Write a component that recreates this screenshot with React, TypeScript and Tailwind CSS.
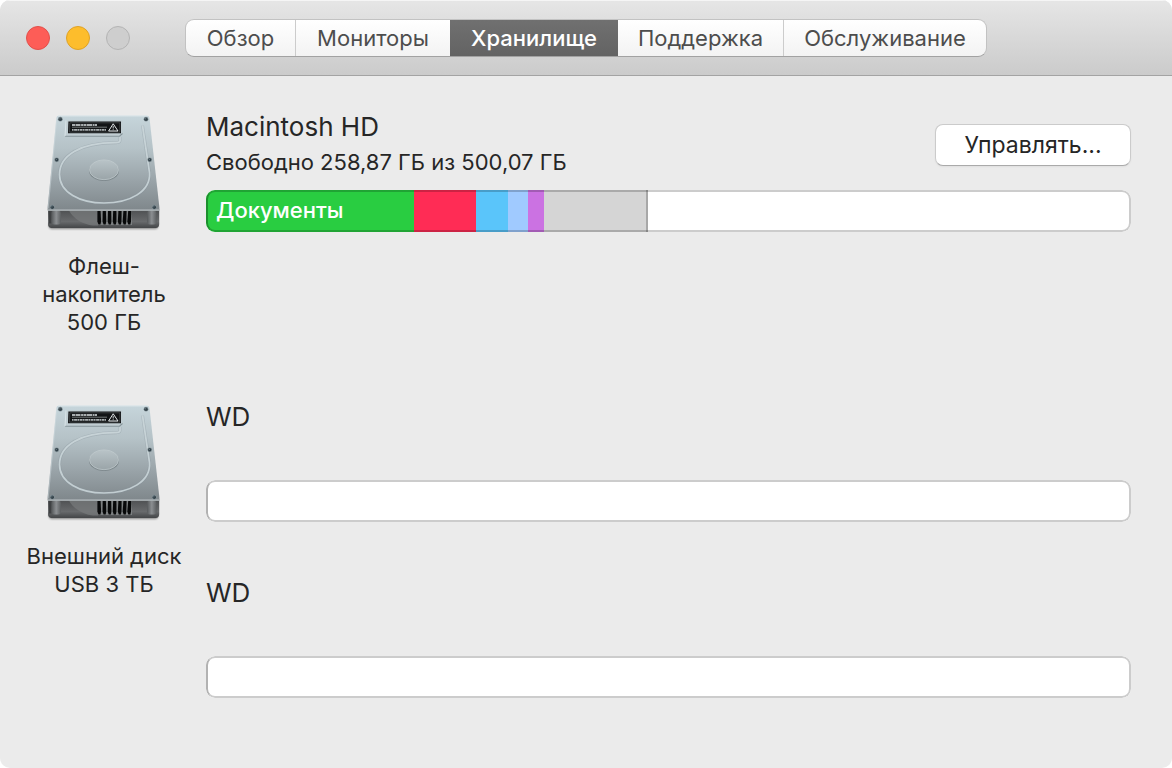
import { useId } from "react";
import type { ReactNode } from "react";

const tabs = [
  { label: "Обзор", width: "w-[109px]", active: false },
  { label: "Мониторы", width: "w-[155px]", active: false },
  { label: "Хранилище", width: "w-[168px]", active: true },
  { label: "Поддержка", width: "w-[165px]", active: false },
  { label: "Обслуживание", width: "w-[203px]", active: false },
];

type Segment = { color: string; share: number; label?: string };

const usage: Segment[] = [
  { color: "bg-[#29cd41]", share: 22.5, label: "Документы" },
  { color: "bg-[#ff2c55]", share: 6.7 },
  { color: "bg-[#5ac5fa]", share: 3.45 },
  { color: "bg-[#a0caff]", share: 2.15 },
  { color: "bg-[#cb72e2]", share: 1.75 },
  { color: "bg-[#d5d5d5] border-r-2 border-[#a8a8a8]", share: 11.2 },
];

const screws = [
  [16.3, 7.7],
  [102, 7.7],
  [12.7, 48.3],
  [105.7, 48.3],
  [8.3, 95.7],
  [110.3, 95.7],
];

function DriveIcon() {
  const id = useId();
  const plate = `${id}-plate`;
  const front = `${id}-front`;
  const hub = `${id}-hub`;
  const post = `${id}-post`;
  const soft = `${id}-soft`;
  const ridge =
    "M76 25.5V29Q76 31 72 31.2C36 31 15.5 44 15.5 63C15.5 81 36 91.5 60 91.5C86 91.5 107 80 105.5 61L98.5 14";
  return (
    <svg viewBox="0 0.5 120 120" className="size-[120px]" aria-hidden="true">
      <defs>
        <linearGradient id={plate} x1="0" y1="0" x2="0" y2="1">
          <stop offset="0" stopColor="#c6d5db" />
          <stop offset="0.35" stopColor="#b5c2c7" />
          <stop offset="0.7" stopColor="#98a2a7" />
          <stop offset="1" stopColor="#7f878b" />
        </linearGradient>
        <linearGradient id={front} x1="0" y1="0" x2="0" y2="1">
          <stop offset="0" stopColor="#4d4f51" />
          <stop offset="0.65" stopColor="#686a6c" />
          <stop offset="1" stopColor="#434547" />
        </linearGradient>
        <linearGradient id={hub} x1="0" y1="0" x2="0" y2="1">
          <stop offset="0" stopColor="#b9c4c8" />
          <stop offset="1" stopColor="#9aa4a8" />
        </linearGradient>
        <linearGradient id={post} x1="0" y1="0" x2="1" y2="0">
          <stop offset="0" stopColor="#55585a" />
          <stop offset="0.5" stopColor="#8b8e91" />
          <stop offset="1" stopColor="#5c5f61" />
        </linearGradient>
        <filter id={soft} x="-10%" y="-100%" width="120%" height="300%">
          <feGaussianBlur stdDeviation="1.2" />
        </filter>
      </defs>
      <rect x="5" y="111" width="109" height="6.5" rx="3" fill="#000" opacity="0.45" filter={`url(#${soft})`} />
      <path d="M4 98H115.2V112.5Q115.2 116.5 111.5 116.5H7.7Q4 116.5 4 112.5Z" fill={`url(#${front})`} />
      <path d="M25 99H54V114H49C39 113 29 107 25 99Z" fill="#77797b" opacity="0.75" />
      <path d="M5 99H7.5V112H5Z" fill="#3f4143" />
      <rect x="7.5" y="99" width="9.5" height="14" rx="3" fill={`url(#${post})`} />
      <rect x="103" y="99" width="9.5" height="14" rx="3" fill={`url(#${post})`} />
      <path d="M53 99H88V113.5H54Z" fill="#7d8082" />
      {[53.4, 58.7, 64, 69.2, 74.4, 79.4, 84.2].map((x, i) => (
        <path
          key={x}
          d={`M${x} 99.5h3.2l${0.5 - i * 0.15} 10.5l-0.6 3h-2.1l-1-3Z`}
          fill="#08090a"
        />
      ))}
      <path
        d="M14.5 4.3H103Q105.2 4.3 105.5 6.5L115.4 96V98.8H3.6V96L12.4 6.5Q12.7 4.3 14.5 4.3Z"
        fill={`url(#${plate})`}
      />
      <path d="M14 4.5H103.5" stroke="#dbe6ea" strokeWidth="0.9" />
      <path d="M12.8 6.5L4.1 97" stroke="#d5dfe3" strokeWidth="0.8" fill="none" opacity="0.6" />
      <path d="M3.7 98.6H115.3" stroke="#b9c0c3" strokeWidth="1.2" />
      <path d="M22 9L21 24.5H75.5L78.5 22V9Z" fill="#c0cdd2" />
      <path d="M21 24.7H75.5L78.5 22" fill="none" stroke="#87959a" strokeWidth="1.1" />
      <path d="M22 9L21 24.7" fill="none" stroke="#dde7eb" strokeWidth="0.9" />
      <path d={ridge} fill="none" stroke="#87939a" strokeWidth="3" opacity="0.35" />
      <path d={ridge} fill="none" stroke="#cdd8dc" strokeWidth="1.7" opacity="0.85" />
      <ellipse cx="60" cy="59.2" rx="15" ry="10.3" fill="#737d81" opacity="0.75" />
      <ellipse
        cx="60"
        cy="58.3"
        rx="14.5"
        ry="9.9"
        fill={`url(#${hub})`}
        stroke="#c3cdd0"
        strokeWidth="0.7"
      />
      <path d="M24.4 10H77V21.8H24Z" fill="#121416" />
      <path d="M25.8 11.3H75.8V20.6H25.5Z" fill="none" stroke="#656a6d" strokeWidth="0.5" />
      <path d="M28 13.5H53" stroke="#dce1e3" strokeWidth="1.5" strokeDasharray="3 0.5 5 0.6 2 0.4" />
      <path d="M28 15.7H63" stroke="#8d9294" strokeWidth="0.8" />
      <path d="M28 18.3H62" stroke="#a9afb1" strokeWidth="1.8" strokeDasharray="1.6 0.5 3 0.4" />
      <path d="M69.2 12.3L74 19.5H64.6Z" fill="none" stroke="#e1e6e8" strokeWidth="1" strokeLinejoin="round" />
      <path d="M69.2 14.5V17M69.2 17.8V18.6" stroke="#e1e6e8" strokeWidth="0.9" />
      {screws.map(([x, y]) => (
        <g key={`${x}-${y}`}>
          <circle cx={x} cy={y} r="2.4" fill="#829096" />
          <circle cx={x} cy={y} r="1.7" fill="#34424a" />
          <circle cx={x - 0.4} cy={y - 0.5} r="0.5" fill="#8497a0" />
        </g>
      ))}
    </svg>
  );
}

function StorageBar({ segments = [] }: { segments?: Segment[] }) {
  return (
    <div className="relative flex h-[42px] overflow-hidden rounded-[9px] bg-white">
      {segments.map((segment) => (
        <div
          key={segment.color}
          className={`flex shrink-0 items-center ${segment.color}`}
          style={{ width: `${segment.share}%` }}
        >
          {segment.label && (
            <span className="pb-0.5 pl-2.5 text-[22px] leading-7 font-medium text-white">{segment.label}</span>
          )}
        </div>
      ))}
      <div className="pointer-events-none absolute inset-0 rounded-[9px] border-2 border-black/20 border-l-black/30" />
    </div>
  );
}

function VolumeName({ children }: { children: ReactNode }) {
  return <h2 className="text-[26px] leading-[30px]">{children}</h2>;
}

function Device({ label, children }: { label: string[]; children: ReactNode }) {
  return (
    <section className="flex gap-3.5">
      <div className="flex w-44 shrink-0 flex-col items-center gap-5">
        <DriveIcon />
        <p className="text-center text-[22px] leading-7">
          {label.map((line) => (
            <span key={line} className="block whitespace-nowrap">
              {line}
            </span>
          ))}
        </p>
      </div>
      <div className="flex min-w-0 grow flex-col gap-14">{children}</div>
    </section>
  );
}

export default function App() {
  return (
    <div className="min-h-screen bg-white font-['Inter','Noto_Sans',sans-serif] text-[#262626]">
      <div className="flex min-h-screen flex-col overflow-hidden rounded-[10px] bg-[#ebebeb]">
        <header className="flex h-[76px] items-center border-b border-[#a3a3a3] bg-linear-to-b from-[#e6e6e6] to-[#cbcbcb] pt-px pl-[26px] shadow-[inset_0_1px_0_#f5f5f5]">
          <div className="flex w-[159px] shrink-0 gap-4">
            <button aria-label="Закрыть" className="size-6 rounded-full border border-[#e2504b] bg-[#fd5d57]" />
            <button aria-label="Свернуть" className="size-6 rounded-full border border-[#dfa226] bg-[#fdbd2c]" />
            <button
              aria-label="Развернуть"
              disabled
              className="size-6 rounded-full border border-[#b4b4b4] bg-[#cecece]"
            />
          </div>
          <nav className="flex h-[38px] overflow-hidden rounded-[9px] border border-[#c2c2c2] border-b-[#a2a2a2] bg-linear-to-b from-white to-[#f3f3f3]">
            {tabs.map((tab, i) => (
              <button
                key={tab.label}
                aria-pressed={tab.active}
                className={`${tab.width} text-[22px] leading-7 ${
                  tab.active
                    ? "bg-linear-to-b from-[#707070] to-[#636363] font-medium text-white"
                    : "text-[#4d4d4d]"
                } ${i === 1 || i === 4 ? "border-l border-[#cccccc]" : ""}`}
              >
                {tab.label}
              </button>
            ))}
          </nav>
        </header>
        <main className="flex flex-col gap-[66px] pt-9 pr-[41px] pb-12 pl-4">
          <Device label={["Флеш-", "накопитель", "500 ГБ"]}>
            <div className="flex flex-col gap-2">
              <div className="flex items-start justify-between">
                <div>
                  <VolumeName>Macintosh HD</VolumeName>
                  <p className="text-[22px] leading-10">Свободно 258,87 ГБ из 500,07 ГБ</p>
                </div>
                <button className="mt-3 h-[42px] w-[196px] rounded-lg border border-[#cbcbcb] border-b-[#aaaaaa] bg-white text-[23px] leading-7 shadow-xs">
                  Управлять...
                </button>
              </div>
              <StorageBar segments={usage} />
            </div>
          </Device>
          <Device label={["Внешний диск", "USB 3 ТБ"]}>
            <div className="flex flex-col gap-12">
              <VolumeName>WD</VolumeName>
              <StorageBar />
            </div>
            <div className="flex flex-col gap-12">
              <VolumeName>WD</VolumeName>
              <StorageBar />
            </div>
          </Device>
        </main>
      </div>
    </div>
  );
}
